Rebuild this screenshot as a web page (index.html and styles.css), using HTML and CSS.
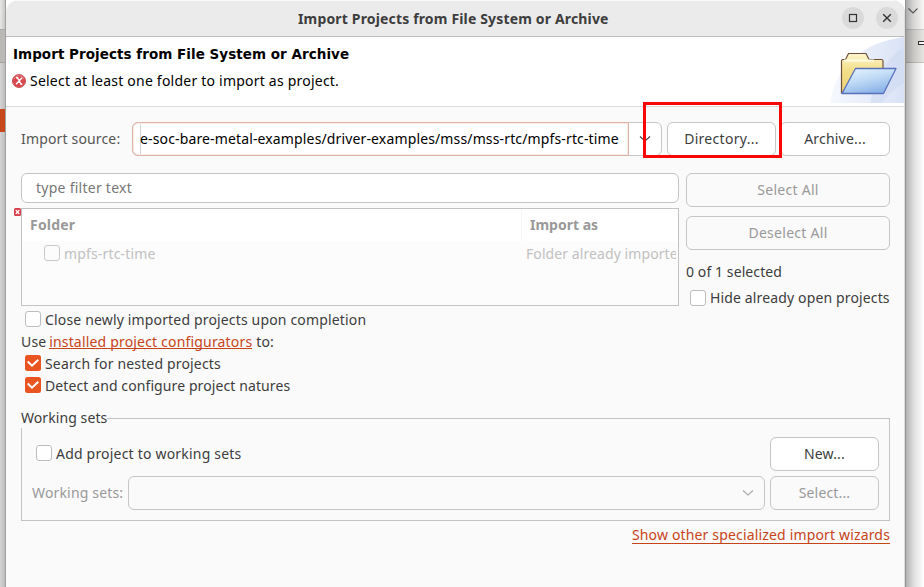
FILE: index.html
```
<!DOCTYPE html>
<html lang="en">
<head>
<meta charset="utf-8">
<title>Import Projects from File System or Archive</title>
<link rel="stylesheet" href="styles.css">
</head>
<body>
<div class="desktop">
  <div class="behind behind-left"><i class="b-top"></i><i class="b-bar"></i><i class="b-gap"></i><i class="b-accent"></i><i class="b-rest"></i></div>
  <div class="dialog">
    <header class="titlebar">
      <span class="title">Import Projects from File System or Archive</span>
      <div class="controls">
        <button class="ctl" aria-label="Maximize"><svg width="22" height="22" viewBox="0 0 22 22"><rect x="7.5" y="7.5" width="7" height="7" fill="none" stroke="#333" stroke-width="1.2"/></svg></button>
        <button class="ctl" aria-label="Close"><svg width="22" height="22" viewBox="0 0 22 22"><path d="M7.2 7.2l7.6 7.6M14.8 7.2l-7.6 7.6" stroke="#333" stroke-width="1.4"/></svg></button>
      </div>
    </header>
    <section class="banner">
      <div class="banner-text">
        <h1>Import Projects from File System or Archive</h1>
        <p class="message"><svg width="14" height="14" viewBox="0 0 14 14"><circle cx="7" cy="7" r="6.5" fill="#d9484f" stroke="#c8565a"/><path d="M2 5a5.4 5.4 0 0 1 10 0" fill="none" stroke="#e9888b"/><path d="M4 3.700h1.500l3.600 6.600h1.200M10.100 3.700L4 10.300" fill="none" stroke="#fff" stroke-width="1.400"/></svg><span>Select at least one folder to import as project.</span></p>
      </div>
      <svg class="art" width="74" height="66" viewBox="0 0 74 66">
        <defs>
          <linearGradient id="sky" x1="0" x2="1"><stop offset="0" stop-color="#f3f6fd"/><stop offset="1" stop-color="#cdd9f2"/></linearGradient>
          <linearGradient id="back" x1="0" y1="0" x2="0" y2="1"><stop offset="0" stop-color="#fdf6cf"/><stop offset=".4" stop-color="#f3e08c"/><stop offset="1" stop-color="#ecd070"/></linearGradient>
          <linearGradient id="front" x1="0" y1="0" x2=".5" y2="1"><stop offset="0" stop-color="#e9f6fe"/><stop offset=".5" stop-color="#c2dcf6"/><stop offset="1" stop-color="#8db4e8"/></linearGradient>
        </defs>
        <path d="M0 66C6 28 34 5 74 0v66z" fill="url(#sky)" opacity=".75"/>
        <path d="M40 66C47 37 58 20 74 10v36Q62 52 52 66z" fill="#c7d5f1" opacity=".4"/>
        <path d="M11.500 56.500V24q0-1.500 1.500-1.500h2.500l3-6h17.500l3 6h12.500q1.500 0 1.500 1.500v31" fill="url(#back)" stroke="#705038" stroke-width="1.200"/>
        <path d="M14 23.500h30" stroke="#fffbe4" stroke-width="1.800"/>
        <path d="M12 56.500L25.500 31.500H66L53.500 56.500z" fill="url(#front)" stroke="#5870bd" stroke-width="1.300" stroke-linejoin="round"/>
      </svg>
    </section>
    <main class="content">
      <div class="source">
        <label class="source-label">Import source:</label>
        <div class="combo">
          <div class="entry"><span>e-soc-bare-metal-examples/driver-examples/mss/mss-rtc/mpfs-rtc-time</span></div>
          <div class="drop"><svg width="12" height="8" viewBox="0 0 12 8"><path d="M1 1.500l5 4.500 5-4.500" fill="none" stroke="#444" stroke-width="1.100"/></svg></div>
        </div>
        <button class="btn directory">Directory...</button>
        <button class="btn archive">Archive...</button>
        <div class="highlight"></div>
      </div>
      <div class="picker">
        <div class="picker-main">
          <div class="filter">type filter text</div>
          <div class="tree">
            <svg class="tree-error" width="7" height="8" viewBox="0 0 7 8"><rect width="7" height="8" rx="1.500" fill="#d63e4b"/><path d="M1.700 2l3.600 4M5.300 2L1.700 6" stroke="#fff" stroke-width="1.200"/></svg>
            <div class="tree-head"><span>Folder</span><span>Import as</span></div>
            <div class="tree-row"><div class="cell"><i class="check off"></i><span>mpfs-rtc-time</span></div><div class="cell status">Folder already imported</div></div>
          </div>
        </div>
        <div class="picker-side">
          <button class="btn disabled">Select All</button>
          <button class="btn disabled">Deselect All</button>
          <div class="count">0 of 1 selected</div>
          <label class="option"><i class="check"></i><span>Hide already open projects</span></label>
        </div>
      </div>
      <div class="options">
        <label class="option"><i class="check"></i><span>Close newly imported projects upon completion</span></label>
        <p class="use">Use <a class="link configurators">installed project configurators</a> <span>to:</span></p>
        <label class="option"><svg class="checked" width="16" height="16" viewBox="0 0 16 16"><rect width="16" height="16" rx="2.500" fill="#e95420"/><path d="M2.700 6.500L7 10.700l6.300-6" fill="none" stroke="#fff" stroke-width="2"/></svg><span>Search for nested projects</span></label>
        <label class="option detect"><svg class="checked" width="16" height="16" viewBox="0 0 16 16"><rect width="16" height="16" rx="2.500" fill="#e95420"/><path d="M2.700 6.500L7 10.700l6.300-6" fill="none" stroke="#fff" stroke-width="2"/></svg><span>Detect and configure project natures</span></label>
      </div>
      <div class="group">
        <div class="group-title"><span>Working sets</span><i></i></div>
        <div class="group-body">
          <label class="option add"><i class="check"></i><span>Add project to working sets</span></label>
          <button class="btn">New...</button>
          <div class="sets"><span>Working sets:</span>
            <div class="select"><svg width="12" height="8" viewBox="0 0 12 8"><path d="M1 1.500l5 4.500 5-4.500" fill="none" stroke="#aaa" stroke-width="1.100"/></svg></div></div>
          <button class="btn disabled">Select...</button>
        </div>
      </div>
      <div class="more"><a class="link">Show other specialized import wizards</a></div>
    </main>
  </div>
  <div class="behind behind-right">
    <div class="r-top"><svg width="12" height="8" viewBox="0 0 12 8"><path d="M1.500 1.500L6 6l4.500-4.500" fill="none" stroke="#666" stroke-width="1.200"/></svg></div>
    <div class="r-bar"><i></i></div>
    <div class="r-rest"></div>
  </div>
</div>
</body>
</html>
```
FILE: styles.css
```
* { box-sizing: border-box; }
body { margin: 0; background: #fff; font: 14px/20px "Noto Sans", sans-serif; letter-spacing: .16px; color: #3d3d3d; }
button { font: inherit; letter-spacing: inherit; color: inherit; padding: 0; }
h1, p { margin: 0; }
svg { display: block; flex: none; }
.desktop { display: grid; grid-template-columns: 6px 899px 19px; height: 587px; overflow: hidden; white-space: nowrap; }

.behind-left { display: flex; flex-direction: column; background: linear-gradient(90deg, #d4d4d4, #bdbdbd); border-right: 1px solid #a0a0a0; }
.b-top { height: 29px; background: linear-gradient(90deg, #e8e8e6, #c8c8c8); }
.b-bar { height: 34px; background: #bbb9b5; border-top: 1px solid #aaa; border-bottom: 1px solid #a5a39e; }
.b-gap { height: 46px; }
.b-accent { height: 23px; background: #c7481d; }

.dialog { position: relative; z-index: 1; height: 587px; background: #fafafa; border-right: 1px solid #dedede; border-radius: 13px 13px 0 0; overflow: hidden; }
.titlebar { display: grid; grid-template-columns: 1fr auto; height: 37px; background: #ebebeb; border-top: 1px solid #fafafa; border-bottom: 1px solid #bdbdbd; align-items: center; }
.title { padding-left: 292px; font-weight: 700; color: #3d3d3d; }
.controls { display: flex; gap: 12px; padding-right: 6px; margin-top: -1px; }
.ctl { width: 22px; height: 22px; border: 0; border-radius: 50%; background: #dadada; }

.banner { display: flex; justify-content: space-between; height: 70px; background: #fff; border-bottom: 1px solid #dcdcdc; color: #000; }
.banner-text { padding: 7px 0 0 7px; }
h1 { font: bold 13.5px/20px "DejaVu Sans", sans-serif; letter-spacing: .04px; }
.message { display: flex; align-items: center; gap: 3px; margin: 7px 0 0 -1px; letter-spacing: .22px; }
.message span { padding-left: 1px; }

.content { padding: 15px 14px 0 15px; }
.source { position: relative; display: flex; height: 34px; }
.source-label { width: 111px; line-height: 34px; color: #555; }
.combo { display: flex; width: 530px; background: #fff; border: 1px solid #c6c6c6; border-radius: 6px; }
.entry { width: 497px; margin: -1px 0 -1px -1px; border: 1px solid #dfb3a7; border-radius: 6px 0 0 6px; box-shadow: inset 0 0 0 1px #faeae6; padding-left: 7px; color: #000; line-height: 32px; letter-spacing: .14px; }
.entry span { display: block; margin: 1px 0; line-height: 30px; border-left: 1px solid #d5d5d5; text-indent: -1px; }
.drop { flex: 1; display: flex; align-items: center; justify-content: center; }
.btn { display: block; height: 34px; border: 1px solid #c6c6c6; border-radius: 6px; background: #fff; text-align: center; line-height: 32px; }
.btn.disabled { background: #fafafa; color: #999; }
.directory { width: 109px; margin-left: 5px; letter-spacing: .3px; }
.archive { width: 110px; margin-left: 4px; letter-spacing: .2px; }
.highlight { position: absolute; left: 622px; top: -20px; width: 139px; height: 56px; border: 3px solid #f90606; }

.picker { display: grid; grid-template-columns: 658px 204px; column-gap: 7px; margin-top: 17px; height: 133px; }
.filter { height: 30px; border: 1px solid #c6c6c6; border-radius: 6px; background: #fff; padding-left: 14px; line-height: 27px; color: #777; letter-spacing: .26px; }
.tree { position: relative; height: 98px; margin-top: 5px; border: 1px solid #c3c3c3; background: #fcfcfc; padding-right: 2px; }
.tree-error { position: absolute; left: -8px; top: -1px; }
.tree-head { display: grid; grid-template-columns: 500px 1fr; height: 32px; margin-right: -2px; background: #fff; font-weight: 700; color: #999; line-height: 32px; }
.tree-head span { padding-left: 8px; letter-spacing: .2px; border-right: 1px solid #f6f6f6; }
.tree-head span:last-child { padding-left: 8px; letter-spacing: 0; border: 0; }
.tree-row { display: grid; grid-template-columns: 504px 150px; color: #c1c1c1; line-height: 25px; }
.cell { display: flex; overflow: hidden; }
.cell .check { margin: 4px 4px 0 22px; }
.status { letter-spacing: .08px; }
.check { display: block; flex: none; width: 16px; height: 16px; border: 1px solid #bdbdbd; border-radius: 3px; background: #fff; }
.check.off { border-color: #c9c9c9; background: #fcfcfc; }
.picker-side .btn { width: 100%; margin-bottom: 9px; letter-spacing: .28px; }
.count { margin-top: 12px; letter-spacing: .09px; }
.option { display: flex; align-items: center; gap: 4px; height: 22px; }
.picker-side .option { margin: 5px 0 0 4px; letter-spacing: .14px; }

.options { padding-top: 2px; }
.options .option { margin-left: 4px; }
.options .option span { padding-top: 2px; }
.use { height: 22px; line-height: 24px; }
.link { color: #c7441a; border-bottom: 1px solid #c7441a; }
.use .link { display: inline-block; height: 19px; margin-left: -1px; line-height: 24px; vertical-align: top; letter-spacing: .18px; }
.detect { letter-spacing: .1px; }

.group { margin-top: 12px; }
.group-title { display: flex; align-items: center; height: 20px; letter-spacing: .08px; }
.group-title i { flex: 1; height: 10px; align-self: flex-end; border-top: 1px solid #c3c3c3; border-right: 1px solid #c3c3c3; }
.group-body { display: grid; grid-template-columns: 733px 109px; grid-template-rows: 34px 34px; column-gap: 5px; row-gap: 5px; height: 93px; border: 1px solid #c3c3c3; border-top: 0; padding: 9px 0 0 10px; }
.add { margin-left: 4px; height: 32px; letter-spacing: .2px; }
.add span { padding-top: 2px; }
.sets { display: flex; line-height: 34px; color: #999; }
.sets span { width: 96px; }
.select { flex: 1; display: flex; align-items: center; justify-content: flex-end; border: 1px solid #c6c6c6; border-radius: 6px; padding-right: 10px; }
.more { display: flex; justify-content: flex-end; margin-top: 3px; }
.more .link { height: 20px; line-height: 22px; }

.behind-right { position: relative; display: flex; flex-direction: column; }
.behind-right::after { content: ""; position: absolute; inset: 0; background: linear-gradient(90deg, rgba(0,0,0,.3), rgba(0,0,0,.12) 45%, rgba(0,0,0,0)); border-left: 1px solid #929292; }
.r-top { height: 30px; background: #f7f6f5; border-bottom: 1px solid #ccc; padding: 7px 0 0 2px; }
.r-bar { height: 33px; background: #e6e4e1; border-bottom: 1px solid #c9c6c1; padding: 11px 0 0 13px; }
.r-bar i { display: block; width: 12px; height: 4px; border: 1px solid #333; background: #fff; }
.r-rest { flex: 1; background: #fff; }
```
